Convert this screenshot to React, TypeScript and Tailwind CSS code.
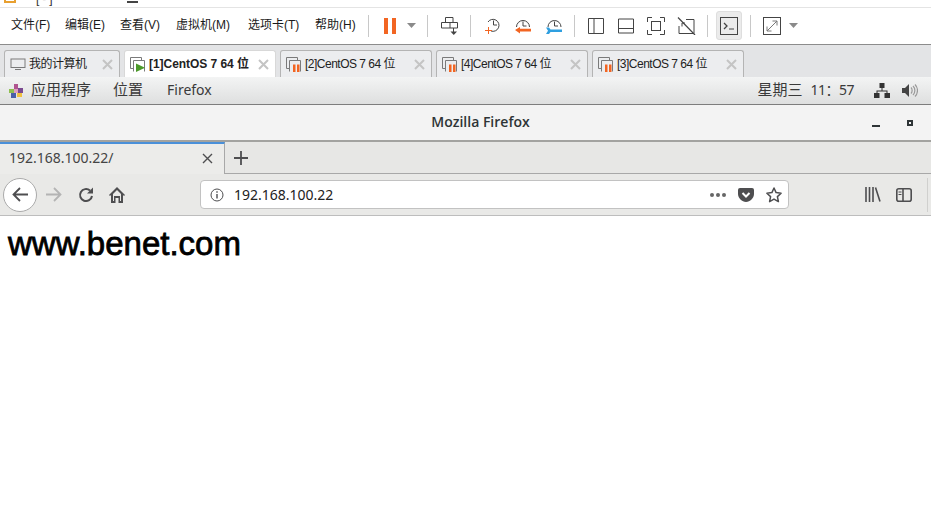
import React from "react";

const F = "font-['Liberation_Sans','Noto_Sans_CJK_SC',sans-serif]";
const N = "font-['Noto_Sans','Noto_Sans_CJK_SC',sans-serif]";

function Sep({ l }: { l: string }) { return <div className={`${l} w-px h-[22px] bg-[#c8c8c8]`} />; }

function Caret({ className = "" }: { className?: string }) {
  return <svg width="9" height="5" viewBox="0 0 9 5" className={className}><path d="M0 0h9L4.500 5z" fill="#8a8a8a" /></svg>;
}

function VmIcon({ run }: { run: boolean }) {
  return (
    <svg width="16" height="15" viewBox="0 0 16 15" fill="none" className="shrink-0">
      <path d="M3.500 11.500H.5V.5h11v3" stroke="#7a7a7a" />
      <path d="M3.500 14.500V3.500h11v11" stroke="#7a7a7a" />
      {run ? <path d="M6 6.500l9 4.200-9 4.300z" fill="#4c9a2a" /> : <path d="M7 7.500h2.500V15H7zM11 7.500h2.500V15H11z" fill="#f26522" />}
    </svg>
  );
}

function Tab({ label, w, active, pc }: { label: string; w: string; active?: boolean; pc?: boolean }) {
  return (
    <div className={`${w} h-[27px] flex items-center pl-[5px] pr-[5px] rounded-t-[3px] border border-b-0 ${active ? "bg-white border-[#d8d8d8]" : "bg-[#ecedef] border-[#b4b4b4]"}`}>
      {pc ? (
        <svg width="16" height="14" viewBox="0 0 16 14" fill="none" className="shrink-0"><rect x="1" y="2" width="14" height="8.500" stroke="#7a7a7a" /><path d="M5 12.500h6" stroke="#7a7a7a" /></svg>
      ) : <VmIcon run={!!active} />}
      <span className={`ml-[3px] text-[12px] leading-none whitespace-nowrap text-[#222] ${active ? "font-bold tracking-[-0.05px]" : "tracking-[-0.5px]"} ${F}`}>{label}</span>
      <svg width="11" height="11" viewBox="0 0 11 11" className="ml-auto mr-[1px]" fill="none"><path d="M1 1l9 9M10 1l-9 9" stroke="#c4c4c4" strokeWidth="2" /></svg>
    </div>
  );
}

const menus: [string, string][] = [
  ["文件(F)", "w-[54px]"],
  ["编辑(E)", "w-[55px]"],
  ["查看(V)", "w-[56px]"],
  ["虚拟机(M)", "w-[72px]"],
  ["选项卡(T)", "w-[67px]"],
  ["帮助(H)", "w-[42px]"],
];

function Toolbar() {
  const s = "#444444";
  return (
    <div className="h-[35px] pb-[1px] flex items-center bg-white border-b border-[#8c8c8c] box-content">
      <div className="flex items-center pl-[11px] pb-[2px] w-[368px]">
        {menus.map(([t, w]) => (
          <span key={t} className={`${w} text-[12px] leading-none whitespace-nowrap text-[#1a1a1a] ${F}`}>{t}</span>
        ))}
      </div>
      <Sep l="" />
      <svg width="12" height="16" viewBox="0 0 12 16" className="ml-[15px]"><path d="M0 0h4v16H0zM8 0h4v16H8z" fill="#f26522" /></svg>
      <Caret className="ml-[11px]" />
      <Sep l="ml-[11px]" />
      <svg width="17" height="18" viewBox="0 0 17 18" fill="none" className="ml-[13px]"><path d="M4.500 5V.5h7.500V5M.5 5.500h16v5.500H.5zM9 5.500v5.500M12.500 11v4" stroke={s} /><path d="M9.500 14.500h6.500L12.750 18z" fill={s} /></svg>
      <Sep l="ml-[12px]" />
      <svg width="15" height="18" viewBox="0 0 15 18" fill="none" className="ml-[14px]"><path d="M3 5a6 6 0 1 1 3 9" stroke={s} /><path d="M8.500 3.500V8H12" stroke={s} /><path d="M0 13.500h7M3.500 10v7" stroke="#f26522" /></svg>
      <svg width="16" height="18" viewBox="0 0 16 18" fill="none" className="ml-[15px]"><path d="M1.500 10a6.500 6.500 0 1 1 13 0" stroke={s} /><path d="M8 4.500v4.500h3.500" stroke={s} /><path d="M0 13l5-3v1.800h11v2.700H5v2z" fill="#f26522" /></svg>
      <svg width="16" height="18" viewBox="0 0 16 18" fill="none" className="ml-[15px]"><path d="M2 10a6.500 6.500 0 1 1 13 0" stroke={s} /><path d="M8.500 4.500v4.500H12" stroke={s} /><path d="M0 10.500h3l1.500 2H16v2.500H4.500L3 17H0l2-3.200z" fill="#2f9fe0" /></svg>
      <Sep l="ml-[12px]" />
      <svg width="16" height="16" viewBox="0 0 16 16" fill="none" className="ml-[13px]"><path d="M.5.500h15v15H.5zM6 .5v15" stroke={s} /></svg>
      <svg width="16" height="16" viewBox="0 0 16 16" fill="none" className="ml-[14px]"><path d="M.5 1h15v14H.5zM.5 10.500h15" stroke={s} /></svg>
      <svg width="18" height="18" viewBox="0 0 18 18" fill="none" className="ml-[13px]"><path d="M.5 5V.5H5M13 .5h4.500V5M.5 13v4.500H5M13 17.500h4.500V13" stroke={s} /><rect x="4.500" y="4.500" width="9" height="9" stroke={s} /></svg>
      <svg width="19" height="18" viewBox="0 0 19 18" fill="none" className="ml-[12px]"><path d="M9 2.500h8v14H2V9" stroke={s} /><path d="M1 .5l17 17.500" stroke={s} strokeWidth="1.200" /><path d="M5 9.500V6h3" stroke={s} /></svg>
      <Sep l="ml-[11px]" />
      <div className="ml-[8px] w-[26px] h-[29px] flex items-center justify-center rounded-[3px] bg-[#ebebeb] border border-[#dedede]">
        <svg width="18" height="18" viewBox="0 0 18 18" fill="none"><rect x=".5" y=".5" width="17" height="17" stroke={s} /><path d="M4 6l3 3-3 3" stroke={s} strokeWidth="1.300" /><path d="M9 12h5" stroke={s} /></svg>
      </div>
      <Sep l="ml-[8px]" />
      <svg width="18" height="18" viewBox="0 0 18 18" fill="none" className="ml-[12px]"><rect x=".5" y=".5" width="17" height="17" stroke={s} /><path d="M4 14L14 4M9.500 4H14V8.500M4 9.500V14H8.500" stroke="#7a7a7a" /></svg>
      <Caret className="ml-[8px]" />
    </div>
  );
}

function GnomeBar() {
  const t = `mb-[2px] text-[#3a3a3a] leading-none ${N}`;
  return (
    <div className="h-[27px] flex items-center bg-[linear-gradient(#f3f4f4,#dedfdf)] border-b border-[#7d7d7d] box-content">
      <svg width="14" height="14" viewBox="0 0 14 14" className="ml-[9px]">
        <rect x="0" y="5" width="5" height="4" fill="#8fbf4f" /><rect x="5" y="0" width="4" height="5" fill="#b0558f" />
        <rect x="9" y="4" width="5" height="5" fill="#7a4a90" /><rect x="2" y="9" width="5" height="5" fill="#4a5fa8" />
        <rect x="8" y="9" width="5" height="4" fill="#f0c040" /><rect x="5" y="5" width="4" height="4" fill="#e0a0c0" />
      </svg>
      <span className={`ml-[8px] text-[15px] ${t}`}>应用程序</span>
      <span className={`ml-[22px] text-[15px] ${t}`}>位置</span>
      <span className={`ml-[24px] text-[14px] ${t}`}>Firefox</span>
      <span className={`ml-auto text-[15px] ${t}`}>星期三</span>
      <span className={`ml-[8px] text-[14px] tracking-[-0.5px] ${t}`}>11：57</span>
      <svg width="16" height="15" viewBox="0 0 16 15" className="ml-[20px]" fill="#333"><path d="M5.500 0h5v5h-5zM0 10h5.500v5H0zM10.500 10H16v5h-5.500z" /><path d="M7.500 5h1v2.500H13.500V10h-1V8.500h-9V10h-1V7.500h5z" /></svg>
      <svg width="16" height="15" viewBox="0 0 16 15" className="ml-[12px] mr-[13px]" fill="none"><path d="M0 5h3l4-4v13l-4-4H0z" fill="#444" /><path d="M9 4.500c1.500 1.500 1.500 4.500 0 6M11 3c2.500 2.500 2.500 6.500 0 9M13 1.500c3.300 3.300 3.300 8.700 0 12" stroke="#9a9a9a" strokeWidth="1.200" /></svg>
    </div>
  );
}

function Firefox() {
  const s = "#4e4e50";
  return (
    <div className="flex flex-col">
      <div className="h-[33px] pb-[2px] flex items-center justify-center relative bg-[#f3f3f3] border-b-2 border-[#a3a3a0] box-content">
        <span className="pl-[30px] text-[14px] text-[#2e3436] font-semibold font-['Open_Sans',sans-serif]">Mozilla Firefox</span>
        <div className="absolute right-[18px] top-[15px] flex items-start gap-[27px]">
          <div className="w-[8px] h-[2px] mt-[5px] bg-[#2e3436]" />
          <div className="w-[6px] h-[6px] border-2 border-[#2e3436]" />
        </div>
      </div>
      <div className="h-[32px] flex bg-[#e7e7e5]">
        <div className="w-[225px] bg-[#ececea] border-t-2 border-[#4a90d9] border-r border-r-[#a8a8a8] flex items-center pl-[9px] pr-[11px] pb-[2px]">
          <span className={`text-[14px] text-[#444] leading-none ${N}`}>192.168.100.22/</span>
          <svg width="11" height="11" viewBox="0 0 11 11" className="ml-auto" fill="none"><path d="M1 1l9 9M10 1l-9 9" stroke={s} strokeWidth="1.400" /></svg>
        </div>
        <div className="flex-1 border-b border-[#a8a8a8] flex items-center pl-[9px]">
          <svg width="14" height="14" viewBox="0 0 14 14" fill="none"><path d="M7 0v14M0 7h14" stroke={s} strokeWidth="1.800" /></svg>
        </div>
      </div>
      <div className="h-[41px] flex items-center bg-[#e9e9e7] border-b border-[#bdbdbd] box-content">
        <div className="ml-[3px] w-[34px] h-[34px] rounded-full bg-white border border-[#aaa] flex items-center justify-center">
          <svg width="17" height="15" viewBox="0 0 17 15" fill="none"><path d="M16 7.500H2M8 1L1.500 7.500 8 14" stroke={s} strokeWidth="1.800" /></svg>
        </div>
        <svg width="17" height="15" viewBox="0 0 17 15" fill="none" className="ml-[8px]"><path d="M1 7.500h14M9 1l6.500 6.500L9 14" stroke="#b4b4b4" strokeWidth="1.800" /></svg>
        <svg width="16" height="16" viewBox="0 0 16 16" fill="none" className="ml-[16px]"><path d="M14 9a6 6 0 1 1-2-5.500" stroke={s} strokeWidth="2" /><path d="M15 .5v6H9z" fill={s} /></svg>
        <svg width="16" height="16" viewBox="0 0 16 16" className="ml-[15px]" fill={s}><path d="M8 0L0 8l1 1 1-1v8h4.500v-5h3v5H14V8l1 1 1-1zM4 7l4-4 4 4v7h-1V9H5v5H4z" /></svg>
        <div className="ml-[75px] w-[589px] h-[29px] bg-white border border-[#c2c2c2] rounded-[4px] flex items-center">
          <svg width="14" height="14" viewBox="0 0 14 14" fill="none" className="ml-[9px]"><circle cx="7" cy="7" r="6" stroke={s} /><path d="M7 6v4.500M7 3.200v1.500" stroke={s} strokeWidth="1.400" /></svg>
          <span className={`ml-[10px] text-[14px] text-[#222] leading-none ${N}`}>192.168.100.22</span>
          <div className="ml-auto flex gap-[2px]">
            <div className="w-[4px] h-[4px] rounded-full bg-[#666]" /><div className="w-[4px] h-[4px] rounded-full bg-[#666]" /><div className="w-[4px] h-[4px] rounded-full bg-[#666]" />
          </div>
          <svg width="16" height="14" viewBox="0 0 16 14" className="ml-[12px]" fill="none"><path d="M0 2a2 2 0 0 1 2-2h12a2 2 0 0 1 2 2v4c0 4-4 8-8 8S0 10 0 6z" fill={s} /><path d="M4.500 5L8 8.500 11.500 5" stroke="white" strokeWidth="2" /></svg>
          <svg width="16" height="16" viewBox="0 0 16 16" className="ml-[12px] mr-[6px]" fill="none"><path d="M8 1l2.100 4.600 5 .6-3.700 3.400 1 5L8 12.100 3.600 14.600l1-5L.9 6.200l5-.6z" stroke={s} strokeWidth="1.500" strokeLinejoin="round" /></svg>
        </div>
        <svg width="16" height="15" viewBox="0 0 16 15" className="ml-[76px]" fill="none"><path d="M1 0v15M4.500 0v15M8 0v15M10.500 .5l4.500 14" stroke={s} strokeWidth="1.600" /></svg>
        <svg width="16" height="14" viewBox="0 0 16 14" className="ml-[15px]" fill="none"><rect x=".8" y=".8" width="14.400" height="12.400" rx="2" stroke={s} strokeWidth="1.600" /><path d="M7 1v12" stroke={s} strokeWidth="1.600" /><path d="M2.500 4h3M2.500 6.500h3" stroke={s} /></svg>
        <div className="ml-auto w-px h-[34px] bg-[#d0d0ce] mr-[3px]" />
      </div>
    </div>
  );
}

export default function App() {
  return (
    <div className="w-[931px] h-[521px] bg-white overflow-hidden flex flex-col">
      <div className="h-[7px] bg-white relative overflow-hidden border-b border-[#e4e4e4] box-content">
        <div className="absolute left-[4px] top-[-6px] w-[12px] h-[9px] border-2 border-[#e8a030] bg-white" />
        <div className={`absolute left-[36px] top-[-10px] text-[12px] tracking-[3px] text-[#333] ${F}`}>[-]</div>
        <div className="absolute left-[127px] top-[1px] w-[11px] h-[2px] bg-[#444]" />
      </div>
      <Toolbar />
      <div className="h-[32px] bg-[#e3e4e6] flex items-end pl-[4px] gap-[4px]">
        <Tab label="我的计算机" w="w-[116px]" pc />
        <Tab label="[1]CentOS 7 64 位" w="w-[152px]" active />
        <Tab label="[2]CentOS 7 64 位" w="w-[152px]" />
        <Tab label="[4]CentOS 7 64 位" w="w-[152px]" />
        <Tab label="[3]CentOS 7 64 位" w="w-[152px]" />
      </div>
      <GnomeBar />
      <Firefox />
      <div className="flex-1 bg-white pl-[8px] pt-[9px]">
        <h1 className={`text-[33px] leading-[37px] font-normal text-black [-webkit-text-stroke:0.8px_black] ${F}`}>www.benet.com</h1>
      </div>
    </div>
  );
}
